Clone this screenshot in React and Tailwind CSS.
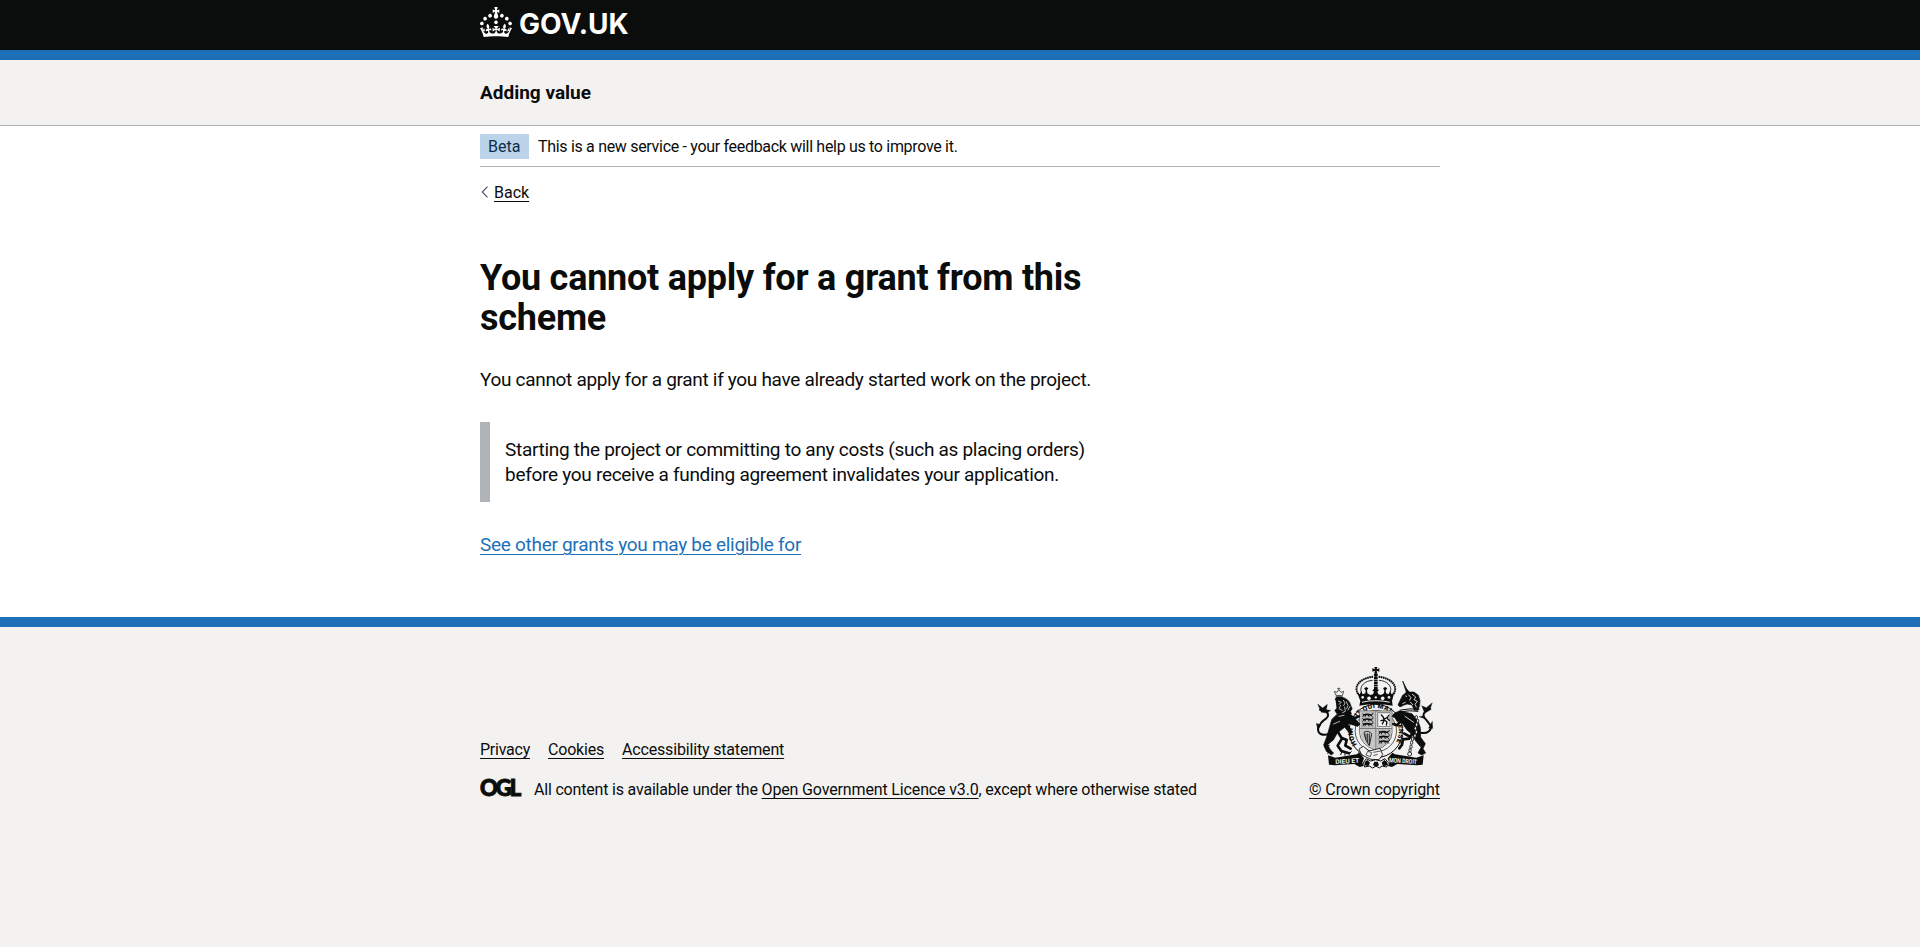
function Crown() {
  return (
    <svg className="block h-[30px] w-8 shrink-0 fill-white" viewBox="0 0 32 30" aria-hidden="true">
      <path d="M22.6 10.4c-1 .4-2-.1-2.4-1-.4-.9.1-2 1-2.4.9-.4 2 .1 2.4 1s-.1 2-1 2.4m-5.9 6.7c-.9.4-2-.1-2.4-1-.4-.9.1-2 1-2.4.9-.4 2 .1 2.4 1s-.1 2-1 2.4m10.8-3.7c-1 .4-2-.1-2.4-1-.4-.9.1-2 1-2.4.9-.4 2 .1 2.4 1s0 2-1 2.4m3.3 4.8c-1 .4-2-.1-2.4-1-.4-.9.1-2 1-2.4.9-.4 2 .1 2.4 1s-.1 2-1 2.4M17 4.7l2.3 1.2V2.5l-2.3.7-.2-.2.9-3h-3.4l.9 3-.2.2c-.1.1-2.3-.7-2.3-.7v3.4L15 4.7c.1.1.1.2.2.2l-1.3 4c-.1.2-.1.4-.1.6 0 1.1.8 2 1.9 2.2h.7c1-.2 1.9-1.1 1.9-2.1 0-.2 0-.4-.1-.6l-1.3-4c-.1-.2 0-.2.1-.3m-7.6 5.7c.9.4 2-.1 2.4-1 .4-.9-.1-2-1-2.4-.9-.4-2 .1-2.4 1s0 2 1 2.4m-5 3c.9.4 2-.1 2.4-1 .4-.9-.1-2-1-2.4-.9-.4-2 .1-2.4 1s.1 2 1 2.4m-3.2 4.8c.9.4 2-.1 2.4-1 .4-.9-.1-2-1-2.4-.9-.4-2 .1-2.4 1s0 2 1 2.4m14.8 11c4.4 0 8.6.3 12.3.8 1.1-4.5 2.4-7 3.7-8.8l-2.5-.9c.2 1.3.3 1.9 0 2.7-.4-.4-.8-1.1-1.1-2.3l-1.2 4c.7-.5 1.3-.8 2-.9-1.1 2.5-2.6 3.1-3.5 3-1.1-.2-1.7-1.2-1.5-2.1.3-1.2 1.5-1.5 2.1-.1 1.1-2.3-.8-3-2-2.3 1.9-1.9 2.1-3.5.6-5.6-2.1 1.6-2.1 3.2-1.2 5.5-1.2-1.4-3.2-.6-2.5 1.6.9-1.4 2.1-.5 1.9.8-.2 1.1-1.7 2.1-3.5 1.9-2.7-.2-2.9-2.1-2.9-3.6.7-.1 1.9.5 2.9 1.9l.4-4.3c-1.1 1.1-2.1 1.4-3.2 1.4.4-1.2 2.1-3 2.1-3h-5.4s1.7 1.9 2.1 3c-1.1 0-2.1-.2-3.2-1.4l.4 4.3c1-1.4 2.2-2 2.9-1.9-.1 1.5-.2 3.4-2.9 3.6-1.9.2-3.4-.8-3.5-1.9-.2-1.3 1-2.2 1.9-.8.7-2.3-1.2-3-2.5-1.6.9-2.2.9-3.9-1.2-5.5-1.5 2-1.3 3.7.6 5.6-1.2-.7-3.1 0-2 2.3.6-1.4 1.8-1.1 2.1.1.2.9-.3 1.9-1.5 2.1-.9.2-2.4-.5-3.5-3 .6 0 1.2.3 2 .9l-1.2-4c-.3 1.1-.7 1.9-1.1 2.3-.3-.8-.2-1.4 0-2.7l-2.9.9C1.3 23 2.6 25.5 3.7 30c3.7-.5 7.9-.8 12.3-.8" />
    </svg>
  );
}

const ink = '#0b0c0c';
const paper = '#f3f2f1';

function PassantLions({ x, y }) {
  return (
    <g transform={`translate(${x} ${y})`} fill="none" stroke={ink} strokeLinecap="round">
      {[0, 14, 28].map((dy) => (
        <g key={dy} transform={`translate(0 ${dy})`}>
          <path strokeWidth="5" d="M7 6 Q17 2 28 6" />
          <path strokeWidth="2.500" d="M4 3l4 3-4 5M13 6l-2 5M21 6l2 5M29 6l4 5M29 5q8 1 6-5" />
        </g>
      ))}
    </g>
  );
}

function Crest() {
  return (
    <svg className="block h-[104px] w-[118px]" viewBox="48 33 354 312" fill={ink} aria-hidden="true">
      <defs>
        <path id="garter" d="M171 268 A69 69 0 1 1 284 268" />
      </defs>

      {/* crown */}
      <path d="M223 36h9l-2 7 8-3v10l-8-3 2 8h-9l2-8-8 3V40l8 3z" />
      <circle cx="227.500" cy="60" r="6" />
      <g fill="none" stroke={ink}>
        <path strokeWidth="6" strokeDasharray="5 1.500" d="M174 117C158 88 188 68 221 65M281 117C297 88 267 68 234 65" />
        <path strokeWidth="2.500" d="M184 112C177 92 196 77 218 76M271 112C278 92 259 77 237 76" />
        <path strokeWidth="11" strokeDasharray="6 1.500" d="M227.500 66V108" />
      </g>
      <path d="M171 112l8 6 5-10 4 10 8-3 1-9-5-6 7-4 6 4-4 6 1 9 9 5 8-2 3-8-5-5 10-5 10 5-5 5 3 8 8 2 9-5 1-9-4-6 6-4 7 4-5 6 1 9 8 3 4-10 5 10 8-6-7 26 2 14q-51-10-100 0l3-14z" />
      <g fill={paper}>
        <circle cx="188" cy="127" r="4" />
        <circle cx="207" cy="130" r="5.500" />
        <circle cx="227.500" cy="127" r="3.500" />
        <circle cx="248" cy="130" r="5.500" />
        <circle cx="267" cy="127" r="4" />
        <path d="M186 140q41-8 83 0v3q-42-8-83 0z" />
      </g>

      {/* garter */}
      <g fill="none" stroke={ink}>
        <circle cx="227.500" cy="228" r="80" strokeWidth="3" />
        <circle cx="227.500" cy="228" r="62" strokeWidth="2" />
      </g>
      <text fontFamily="Roboto, sans-serif" fontSize="20" fontWeight="900">
        <textPath href="#garter" textLength="292" lengthAdjust="spacing">HONI SOIT QUI MAL Y PENSE</textPath>
      </text>

      {/* shield */}
      <path fill={paper} stroke="#666" strokeWidth="3" d="M179 168H276V232Q276 268 227.500 286Q179 268 179 232Z" />
      <path fill="#bdbdbd" d="M181 170h46v50h-46zM229 221h45v12q-1 33-45 50z" />
      <path fill="#c6c6c6" d="M181 221h46v62q-45-18-46-50z" />
      <PassantLions x={184} y={174} />
      <PassantLions x={233} y={226} />
      <g fill="none" stroke="#777" strokeWidth="3">
        <rect x="233" y="173" width="37" height="42" />
        <path d="M227.500 168V286M179 220.500H276" />
      </g>
      <path fill="none" stroke={ink} strokeWidth="4" strokeLinecap="round" strokeLinejoin="round" d="M244 180l5 5 4 10-6 12m6-12 8 6-2 9m-6-15-10 2m10-5 9-5m4-6q-8 9 2 15" />
      <path fill="none" stroke={ink} strokeWidth="2.500" d="M192 232q14-8 23 5l-7 35q-10-12-14-29zM198 236v18M203 235v27M208 236v32" />

      {/* lion supporter */}
      <g stroke={ink} strokeLinejoin="round" strokeLinecap="round">
        <path d="M107 136q-5-3 3-10l12-1q19 3 27 17l8 19-5 8 3 8-11 0-9 5-15-1-11-6-5-9 6-6z" />
        <path strokeWidth="2" d="M118 172L150 176L180 207L174 214L152 199L145 209L157 232L151 237L134 217L112 234L100 255L83 269L92 286L101 294L94 300L79 289L71 270L80 246L87 222L95 194Z" />
        <path strokeWidth="8" fill="none" d="M112 228L126 251L113 272L124 288L147 295M124 248L140 255L136 272L152 281" />
        <path strokeWidth="7" fill="none" d="M144 178L163 190L177 184M146 202L171 211" />
        <path strokeWidth="6" fill="none" d="M87 238Q54 244 54 222Q60 202 78 191Q91 180 77 169L60 164" />
        <path d="M82 174l-18-2-11-25 15 12 14-11-3 16 12 2zM53 222l-4-17 13 5z" />
        <path strokeWidth="3" fill="none" d="M88 271l-15 5M93 286l-10 9M126 290l-4 9M135 294l0 7M149 295l5-5" />
      </g>
      <g fill="none" stroke={paper} strokeWidth="2.200" strokeLinecap="round">
        <path d="M115 138l9 4-7 6M122 151l-5 10 10 5M130 136l5 8-4 8M139 140l5 11-4 10M150 154l-6 11M134 156l2 13-8 4M117 184l15-3M101 207l18-8" />
      </g>
      <path fill="none" stroke="#555" strokeWidth="3" d="M108 121l-5-12 8 3 5-8 7 8 8-3-4 13zM116 104v-6M112 101h9M107 124h21" />

      {/* unicorn supporter */}
      <path stroke={ink} strokeWidth="2" d="M308 78l17 34-5 3z" />
      <g stroke={ink} strokeLinejoin="round" strokeLinecap="round">
        <path strokeWidth="2" d="M308 121l10-8 4-9 6 7 14 0 13 10 5 16-1 14-5 15-11 0-7-16-14-3-10 3-12 6-6-6 4-9z" />
        <path strokeWidth="2" d="M300 168L336 176L354 198L361 218L362 247L376 266L369 281L377 294L365 300L354 294L363 277L347 258L338 240L320 224L309 207L291 192L276 184L283 175Z" />
        <path strokeWidth="8" fill="none" d="M301 171L285 181L292 195M308 191L291 211L280 207M336 237L327 251L309 253L306 269L298 280M332 246L313 236" />
        <path strokeWidth="6" fill="none" d="M361 233Q389 238 394 215Q383 199 373 188Q365 174 382 167L391 162" />
        <path d="M374 174l-9-22 14 6 18-15-6 17-11 11zM370 190l-13-5 15-2zM386 219l11-20 1 21z" />
        <path strokeWidth="3" fill="none" d="M302 165q28-6 55-2M304 170q26-5 50-1" />
      </g>
      <g fill="none" stroke={paper} strokeWidth="2.500" strokeLinecap="round">
        <path d="M337 118l10 8-5 8 10 5-7 9 4 8M326 120l7 8-4 7M317 123l3 1M308 146l8-4M315 184l26 18M331 141l7 8" />
      </g>
      <g fill={paper} stroke={ink} strokeWidth="2.500">
        {[[349, 187], [353, 198], [350, 209], [346, 220], [349, 231], [345, 242], [338, 252], [335, 263], [333, 275], [330, 286]].map(([cx, cy]) => (
          <ellipse key={cy} cx={cx} cy={cy} rx="3.500" ry="5.500" />
        ))}
        <circle cx="329" cy="297" r="6" />
      </g>

      {/* buckle and motto scroll */}
      <path fill={paper} stroke={ink} strokeWidth="2.500" d="M177 282l13-8 17 14 33-8 8 19-11 15-24-1-28-13z" />
      <path fill="none" stroke={ink} strokeWidth="2" d="M203 289l12 4-4 12-13-5zM220 292l22-4M233 298l-13 4M174 292l16 9" />
      <path d="M84 301l22 7 64-10 8-5 14 17-5 14 4 9-12 3-16-9-58 4-18-2zM371 301l-22 7-64-10-8-5-14 17 5 14-4 9 12 3 16-9 58 4 18-2z" />
      <path fill={paper} stroke={ink} strokeWidth="3" d="M190 323l9-12 13 7 15-4 15 4 13-7 10 12-5 13-14-3-8 6-10-6-10 6-10-6-14 3z" />
      <path d="M194 321l8-6 8 8-5 11-11-3zM261 321l-8-6-8 8 5 11 11-3zM223 320h10l4 10-9 6-9-6z" />
      <g fontFamily="Roboto, sans-serif" fontSize="19" fontWeight="700" fill={paper}>
        <text x="106" y="325" textLength="72" lengthAdjust="spacingAndGlyphs" transform="rotate(-4 140 318)">DIEU ET</text>
        <text x="267" y="325" textLength="84" lengthAdjust="spacingAndGlyphs" transform="rotate(4 315 318)">MON DROIT</text>
      </g>
    </svg>
  );
}

const link = 'underline decoration-1 underline-offset-[3px]';

export default function App() {
  return (
    <div className="flex min-h-[947px] flex-col bg-[#f3f2f1] font-['Roboto','Liberation_Sans',sans-serif] text-base leading-5 text-[#0b0c0c]">
      <header className="h-[60px] border-b-10 border-[#1d70b8] bg-[#0b0c0c]">
        <div className="mx-auto flex w-[960px] pt-[7px]">
          <a href="#" className="flex gap-[7px] text-white">
            <Crown />
            <span className="font-['Inter',sans-serif] text-[28px] leading-[34px] font-bold">GOV.UK</span>
          </a>
        </div>
      </header>

      <div className="h-[66px] border-b border-[#b1b4b6]">
        <div className="mx-auto w-[960px] pt-5 text-[19px] leading-[25px] font-bold">Adding value</div>
      </div>

      <div className="bg-white">
        <div className="mx-auto h-[491px] w-[960px]">
          <div className="flex h-[41px] items-start gap-[9px] border-b border-[#b1b4b6] pt-2">
            <strong className="h-[25px] w-[49px] bg-[#bbd4ea] pt-[3px] pl-2 font-normal text-[#0c2d4a]">Beta</strong>
            <span className="pt-[3px] tracking-[-0.31px]">This is a new service - your feedback will help us to improve it.</span>
          </div>

          <a href="#" className="mt-4 flex w-fit items-start gap-[7px]">
            <svg className="mt-[3px] ml-0.5 h-3 w-[5px] overflow-visible" viewBox="0 0 5 12" fill="none" stroke="#505a5f" strokeWidth="1.200" aria-hidden="true">
              <path d="M5.500 .7L.3 6l5.200 5.300" />
            </svg>
            <span className={link}>Back</span>
          </a>

          <main className="w-[630px] pt-[55px] text-[19px] leading-[25px]">
            <h1 className="text-4xl leading-10 font-bold tracking-[-0.24px]">You cannot apply for a grant from this scheme</h1>
            <p className="mt-[29px] tracking-[-0.316px]">You cannot apply for a grant if you have already started work on the project.</p>
            <div className="mt-[30px] border-l-10 border-[#b1b4b6] py-[15px] pl-[15px] tracking-[-0.29px]">
              Starting the project or committing to any costs (such as placing orders) before you receive a funding agreement invalidates your application.
            </div>
            <a href="#" className={`mt-[30px] block w-fit tracking-[-0.29px] text-[#1d70b8] ${link}`}>See other grants you may be eligible for</a>
          </main>
        </div>
      </div>

      <footer className="border-t-10 border-[#1d70b8]">
        <div className="mx-auto flex w-[960px] items-end justify-between pt-[39px]">
          <div>
            <nav className="flex gap-[18px]">
              <a href="#" className={`tracking-[-0.24px] ${link}`}>Privacy</a>
              <a href="#" className={`tracking-[-0.2px] ${link}`}>Cookies</a>
              <a href="#" className={`tracking-[-0.17px] ${link}`}>Accessibility statement</a>
            </nav>
            <div className="mt-5 flex h-5">
              <span className="w-[54px] font-['Lato',sans-serif] text-[22px] leading-[15px] font-black tracking-[-2px] [-webkit-text-stroke:1px_#0b0c0c]">OGL</span>
              <span className="tracking-[-0.19px] whitespace-nowrap">
                All content is available under the{' '}
                <a href="#" className={`tracking-[-0.146px] ${link}`}>Open Government Licence v3.0</a>, except where otherwise stated
              </span>
            </div>
          </div>
          <div className="flex w-[131px] flex-col items-center">
            <Crest />
            <a href="#" className={`mt-2.5 whitespace-nowrap tracking-[-0.09px] ${link}`}>© Crown copyright</a>
          </div>
        </div>
      </footer>
    </div>
  );
}
